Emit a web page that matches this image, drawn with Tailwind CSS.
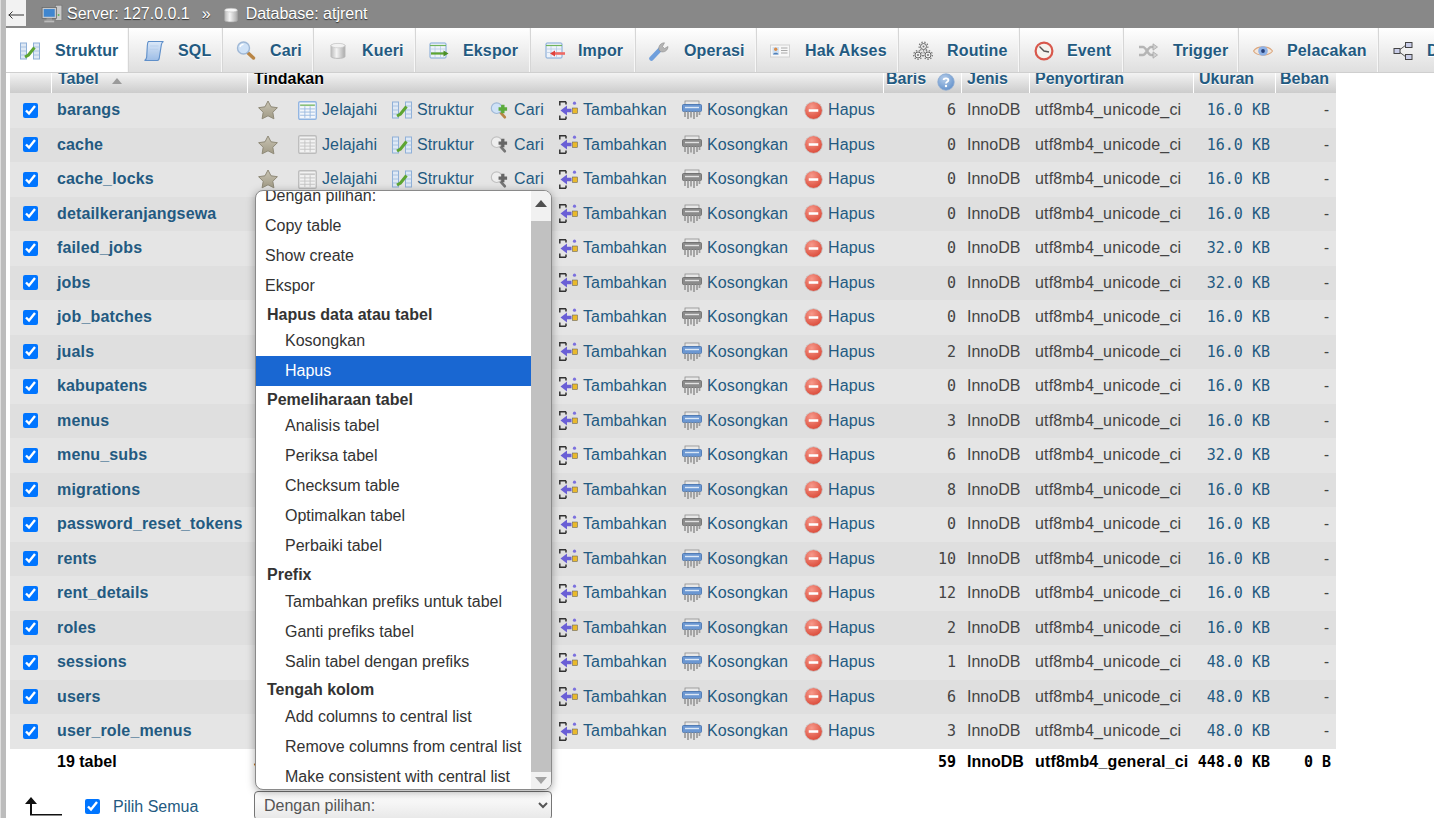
<!DOCTYPE html>
<html lang="en">
<head>
    <meta charset="UTF-8">
    <title>phpMyAdmin - atjrent</title>
    <script src="https://cdn.jsdelivr.net/npm/@tailwindcss/browser@4"></script>
</head>
<body class="bg-white font-['Liberation_Sans',Arial,sans-serif] text-[16px] h-screen overflow-hidden flex">

    <!-- icon sheet -->
    <svg class="absolute w-0 h-0">
        <defs>
            <linearGradient id="blueFill" x1="0" y1="0" x2="0" y2="1"><stop offset="0" stop-color="#dbe8f8"/><stop offset="1" stop-color="#9dbde6"/></linearGradient>
            <linearGradient id="cyl" x1="0" y1="0" x2="1" y2="0"><stop offset="0" stop-color="#bbb"/><stop offset=".4" stop-color="#f4f4f4"/><stop offset="1" stop-color="#aaa"/></linearGradient>
            <radialGradient id="redBall" cx=".4" cy=".3" r=".8"><stop offset="0" stop-color="#f79a8c"/><stop offset="1" stop-color="#d8412f"/></radialGradient>
            <radialGradient id="helpBall" cx=".4" cy=".3" r=".8"><stop offset="0" stop-color="#b5cdea"/><stop offset="1" stop-color="#5c8cc8"/></radialGradient>
            <linearGradient id="starFill" x1="0" y1="0" x2="0" y2="1"><stop offset="0" stop-color="#c9c4b4"/><stop offset="1" stop-color="#a09a85"/></linearGradient>
        </defs>
        <symbol id="i-server" viewBox="0 0 20 20">
            <rect x="13" y="2" width="6" height="14" fill="#c9c9c9" stroke="#777" stroke-width=".7"/>
            <circle cx="16" cy="11" r=".9" fill="#5cb85c"/>
            <rect x="1" y="4" width="13" height="10" fill="#c4c8cc" stroke="#666" stroke-width=".7"/>
            <rect x="2.5" y="5.5" width="10" height="7" fill="#3f86cf"/>
            <rect x="5" y="14" width="5" height="2" fill="#999"/>
            <rect x="3" y="16" width="9" height="1.6" fill="#bbb"/>
        </symbol>
        <symbol id="i-db" viewBox="0 0 20 20">
            <path d="M3 4.5C3 2.8 17 2.8 17 4.5V16C17 18.2 3 18.2 3 16Z" fill="url(#cyl)" stroke="#aaa" stroke-width=".7"/>
            <ellipse cx="10" cy="4.6" rx="7" ry="2" fill="#f7f7f7" stroke="#bbb" stroke-width=".6"/>
        </symbol>
        <symbol id="i-struktur" viewBox="0 0 20 20">
            <rect x="0.5" y="2" width="6" height="16" fill="#dfe9f5" stroke="#8fb0d8"/>
            <path d="M0.5 6H6.5M0.5 10H6.5M0.5 14H6.5" stroke="#9cb9dc" stroke-width=".8"/>
            <rect x="13.5" y="2" width="6" height="16" fill="#dfe9f5" stroke="#8fb0d8"/>
            <path d="M13.5 6H19.5M13.5 10H19.5M13.5 14H19.5" stroke="#9cb9dc" stroke-width=".8"/>
            <path d="M5 16L8.5 14L14.5 6.5" fill="none" stroke="#5da532" stroke-width="3"/>
        </symbol>
        <symbol id="i-sql" viewBox="1 1 18 18">
            <path d="M5 1.5H18.5C17.5 2 16.8 3 16.6 4.5L14.8 16C14.6 17.6 14 18.5 13 18.5H1.5C2.6 18 3.2 17 3.4 15.5L4 5C4.1 3.5 4.3 2 5 1.5Z" fill="url(#blueFill)" stroke="#5f8fc9"/>
            <path d="M6.5 5.5H14M6.2 8.5H13.6M6 11.5H13.2" stroke="#b8cfea" stroke-width=".8"/>
        </symbol>
        <symbol id="i-cari" viewBox="0 0 20 20">
            <path d="M11 11L17.5 17" stroke="#b98545" stroke-width="3.4" stroke-linecap="round"/>
            <circle cx="7.5" cy="7" r="6" fill="#cfe2f7" stroke="#9fb8d6" stroke-width="1.4"/>
            <path d="M4 6C4.5 4.4 6 3.4 7.5 3.4" stroke="#fff" stroke-width="1.3" fill="none"/>
        </symbol>
        <symbol id="i-cari-add" viewBox="0 0 20 20">
            <path d="M11 12L15.5 17" stroke="#b98545" stroke-width="3" stroke-linecap="round"/>
            <circle cx="7" cy="7.5" r="5.6" fill="#cfe2f7" stroke="#9fb8d6" stroke-width="1.2"/>
            <path d="M9 8.5H18M13.5 4V13" stroke="#5cab3c" stroke-width="3.6"/>
        </symbol>
        <symbol id="i-cari-off" viewBox="0 0 20 20">
            <path d="M11 12L15.5 17" stroke="#777" stroke-width="3" stroke-linecap="round"/>
            <circle cx="7" cy="7.5" r="5.6" fill="#eee" stroke="#c0c0c0" stroke-width="1.2"/>
            <path d="M9 8.5H18M13.5 4V13" stroke="#666" stroke-width="3.4"/>
        </symbol>
        <symbol id="i-kueri" viewBox="0 0 20 20">
            <path d="M3 4.5C3 2.5 17 2.5 17 4.5V15.5C17 18 3 18 3 15.5Z" fill="url(#cyl)" stroke="#bbb"/>
            <ellipse cx="10" cy="4.6" rx="7" ry="2.2" fill="#f2f2f2" stroke="#c2c2c2" stroke-width=".6"/>
        </symbol>
        <symbol id="i-ekspor" viewBox="0 0 20 20">
            <rect x="1" y="2" width="16" height="15" rx="1" fill="#eef3fa" stroke="#7fa6d6"/>
            <path d="M1 4.5H17" stroke="#6fb35a" stroke-width="1.2"/>
            <path d="M1 8H17M1 11.5H17M6 5V17M11.5 5V17" stroke="#b7cbe5" stroke-width=".8"/>
            <path d="M2 12.5H15" stroke="#5da532" stroke-width="2.2"/>
            <path d="M14.5 9.5L19.5 12.5L14.5 15.5Z" fill="#4c8f26"/>
        </symbol>
        <symbol id="i-impor" viewBox="0 0 20 20">
            <rect x="1" y="2" width="16" height="15" rx="1" fill="#eef3fa" stroke="#7fa6d6"/>
            <path d="M1 4.5H17" stroke="#6fb35a" stroke-width="1.2"/>
            <path d="M1 8H17M1 11.5H17M6 5V17M11.5 5V17" stroke="#b7cbe5" stroke-width=".8"/>
            <path d="M9 12.5H20" stroke="#ee6a64" stroke-width="2.6"/>
            <path d="M10 9.5L5 12.5L10 15.5Z" fill="#e0423c"/>
        </symbol>
        <symbol id="i-operasi" viewBox="0 0 20 20">
            <path d="M2.5 17.5L11 8.5" stroke="#6f9fdc" stroke-width="4.6" stroke-linecap="round"/>
            <path d="M10 9C9 5.5 11.5 1.8 15.5 1.8L13.5 5.5L15.5 7.5L19 5.5C19 9.5 15 12 11.5 10.5Z" fill="#b4b4b4" stroke="#8d8d8d" stroke-width=".6"/>
        </symbol>
        <symbol id="i-hak" viewBox="0 0 20 20">
            <rect x="0.5" y="4" width="19" height="12" fill="#f7f7f7" stroke="#d2d2d2"/>
            <rect x="2.5" y="6" width="6.5" height="7.5" fill="#cfe0f2"/>
            <circle cx="5.7" cy="8.3" r="1.7" fill="#d98c4a"/>
            <path d="M3 13.5C3 11 8.5 11 8.5 13.5Z" fill="#4f7fb8"/>
            <path d="M11 7H17.5M11 9.5H17.5M11 12H17.5" stroke="#a9a9a9" stroke-width="1"/>
        </symbol>
        <symbol id="i-routine" viewBox="0 0 20 20">
            <g fill="#eee" stroke="#666" stroke-width="1">
                <circle cx="10.5" cy="5.5" r="3"/><circle cx="5" cy="14" r="3"/><circle cx="15" cy="14" r="3"/>
            </g>
            <g fill="none" stroke="#777" stroke-width="1.2" stroke-dasharray="1.4 1.6">
                <circle cx="10.5" cy="5.5" r="4.4"/><circle cx="5" cy="14" r="4.4"/><circle cx="15" cy="14" r="4.4"/>
            </g>
            <circle cx="10.5" cy="5.5" r="1" fill="#777"/><circle cx="5" cy="14" r="1" fill="#777"/><circle cx="15" cy="14" r="1" fill="#777"/>
        </symbol>
        <symbol id="i-event" viewBox="0 0 20 20">
            <circle cx="10" cy="10" r="8.4" fill="#f5f3ee" stroke="#d8584c" stroke-width="2.2"/>
            <path d="M5.5 5.5L10 10L15 11" fill="none" stroke="#555" stroke-width="1.4"/>
        </symbol>
        <symbol id="i-trigger" viewBox="0 0 20 20">
            <path d="M1 6H5C8 6 10 14 13 14H16M1 14H5C8 14 10 6 13 6H16" fill="none" stroke="#b5b5b5" stroke-width="2.4"/>
            <path d="M15 2.8L19.5 6L15 9.2ZM15 10.8L19.5 14L15 17.2Z" fill="#d2d2d2" stroke="#a2a2a2" stroke-width=".7"/>
        </symbol>
        <symbol id="i-eye" viewBox="0 0 20 20">
            <path d="M0.5 10C4 4.5 16 4.5 19.5 10C16 15.5 4 15.5 0.5 10Z" fill="#f3e7dc" stroke="#dca77d" stroke-width="1.1"/>
            <circle cx="10" cy="10" r="4.8" fill="#8fb2e6"/>
            <circle cx="10" cy="10" r="1.9" fill="#27407a"/>
        </symbol>
        <symbol id="i-desainer" viewBox="0 0 20 20">
            <path d="M5 10L13 4M5 10L13 16" stroke="#555" stroke-width="1" fill="none"/>
            <g fill="#c9cde8" stroke="#444" stroke-width="1">
                <rect x="1" y="7.5" width="6" height="5"/><rect x="12.5" y="1.5" width="6.5" height="5"/><rect x="12.5" y="13.5" width="6.5" height="5"/>
            </g>
        </symbol>
        <symbol id="i-star" viewBox="0 0 20 20">
            <path d="M10 1L13 6.8L19.4 7.7L14.8 12.3L15.9 18.8L10 15.8L4.1 18.8L5.2 12.3L0.6 7.7L7 6.8Z" fill="url(#starFill)" stroke="#8f8a78" stroke-width="1" stroke-linejoin="round"/>
        </symbol>
        <symbol id="i-jelajahi" viewBox="0 0 18 18">
            <rect x="0.7" y="0.7" width="16.6" height="16.6" rx="1.2" fill="#f4f7fb" stroke="#8fb4e2" stroke-width="1.3"/>
            <path d="M2 4H16" stroke="#8ac07a" stroke-width="1.6"/>
            <path d="M2 7.5H16M2 10.5H16M2 13.5H16M6.5 5V16M11.5 5V16" stroke="#9dbbe0" stroke-width=".9"/>
        </symbol>
        <symbol id="i-jelajahi-off" viewBox="0 0 18 18">
            <rect x="0.7" y="0.7" width="16.6" height="16.6" rx="1.2" fill="#f2f2f2" stroke="#bcbcbc" stroke-width="1.3"/>
            <path d="M2 4H16" stroke="#c7c7c7" stroke-width="1.6"/>
            <path d="M2 7.5H16M2 10.5H16M2 13.5H16M6.5 5V16M11.5 5V16" stroke="#c4c4c4" stroke-width=".9"/>
        </symbol>
        <symbol id="i-tambah" viewBox="0 0 19 19">
            <path d="M7 0.8H0.8V4.5M7 0.8V3.5M0.8 14.5V18.2H7M7 15.5V18.2" fill="none" stroke="#333" stroke-width="1.5"/>
            <path d="M1.5 9.5L8 4.5V7.7H12.5V11.3H8V14.5Z" fill="#6a5fd6"/>
            <rect x="13.5" y="7" width="5" height="5.5" fill="#e9b92c" stroke="#555" stroke-width=".5"/>
            <circle cx="15.5" cy="2.2" r="1.6" fill="#7b70de"/>
        </symbol>
        <symbol id="i-shred" viewBox="0 0 20 20">
            <rect x="3" y="1" width="14" height="4" fill="#e8e8e8" stroke="#8e8e8e" stroke-width=".8"/>
            <rect x="0.5" y="4.5" width="19" height="7" rx="1" fill="#6b97d2" stroke="#3f6fae" stroke-width=".8"/>
            <path d="M3 7.5H17" stroke="#dce8f6" stroke-width="1.4"/>
            <path d="M3 11.5V17M6 11.5V19M9 11.5V17.5M12 11.5V19M15 11.5V17M17.5 11.5V15" stroke="#9b9b9b" stroke-width="1.7"/>
        </symbol>
        <symbol id="i-shred-off" viewBox="0 0 20 20">
            <rect x="3" y="1" width="14" height="4" fill="#e8e8e8" stroke="#8e8e8e" stroke-width=".8"/>
            <rect x="0.5" y="4.5" width="19" height="7" rx="1" fill="#8b8b8b" stroke="#666" stroke-width=".8"/>
            <path d="M3 7.5H17" stroke="#e2e2e2" stroke-width="1.4"/>
            <path d="M3 11.5V17M6 11.5V19M9 11.5V17.5M12 11.5V19M15 11.5V17M17.5 11.5V15" stroke="#9b9b9b" stroke-width="1.7"/>
        </symbol>
        <symbol id="i-hapus" viewBox="0 0 18 18">
            <circle cx="9" cy="9" r="8.4" fill="url(#redBall)" stroke="#c9c9c9" stroke-width=".8"/>
            <rect x="4.5" y="7.8" width="9" height="2.4" fill="#fff"/>
        </symbol>
        <symbol id="i-help" viewBox="0 0 18 18">
            <circle cx="9" cy="9" r="8.2" fill="url(#helpBall)" stroke="#8aaad2" stroke-width=".8"/>
            <path d="M6.6 7C6.8 4.8 11.4 4.8 11.4 7.2C11.4 8.8 9 8.8 9 10.6" fill="none" stroke="#fff" stroke-width="1.8"/>
            <circle cx="9" cy="13" r="1.2" fill="#fff"/>
        </symbol>
    </svg>

    <div class="w-[6px] shrink-0 bg-[#bcbcbc] border-l border-[#dedede]"></div>

    <div class="flex-1 min-w-0 flex flex-col">
        <!-- breadcrumb bar -->
        <div class="h-[28px] shrink-0 bg-[#888888] flex items-start text-white [text-shadow:0_1px_1px_#333]">
            <div class="w-[20px] h-[26px] bg-[#f2f2f2] flex items-center justify-center">
                <svg class="w-[16px] h-[10px] mt-[4px]" viewBox="0 0 16 10"><path d="M0.5 5H16M4.5 1.5L1 5L4.5 8.5" fill="none" stroke="#333" stroke-width="1"/></svg>
            </div>
            <svg class="w-[22px] h-[22px] ml-[15px] mt-[3px]"><use href="#i-server"/></svg>
            <span class="ml-[4px] leading-[28px]">Server: 127.0.0.1</span>
            <span class="ml-[12px] leading-[28px]">»</span>
            <svg class="w-[18px] h-[18px] ml-[11px] mt-[6px]"><use href="#i-db"/></svg>
            <span class="ml-[6px] leading-[28px]">Database: atjrent</span>
        </div>

        <!-- tabs -->
        <div id="tabs" class="h-[45px] shrink-0 flex overflow-hidden bg-linear-to-b from-white to-[#dfdfdf] border-b border-[#cfcfcf]"></div>

        <!-- table -->
        <div class="pl-[4px] w-[1330px]">
            <div class="h-[20px] overflow-hidden grid grid-cols-[42px_196px_636px_78px_68px_164px_82px_60px] bg-linear-to-b from-[#f3f3f3] to-[#cccccc] font-bold text-[#235a81] leading-[24px] [text-shadow:0_1px_0_#fff]">
                <div class="border-r border-white"></div>
                <div class="border-r border-white pl-[6px] -mt-[6px] flex items-start gap-[13px]">Tabel<svg class="w-[10px] h-[6px] mt-[11px]" viewBox="0 0 10 6"><path d="M5 0L10 6H0Z" fill="#9a9a9a"/></svg></div>
                <div class="border-r border-white pl-[6px] -mt-[6px] text-black">Tindakan</div>
                <div class="border-r border-white pl-[2px] -mt-[6px] flex items-start gap-[11px]">Baris<svg class="w-[18px] h-[18px] mt-[6px]"><use href="#i-help"/></svg></div>
                <div class="border-r border-white pl-[5px] -mt-[6px]">Jenis</div>
                <div class="border-r border-white pl-[5px] -mt-[6px]">Penyortiran</div>
                <div class="border-r border-white pl-[5px] -mt-[6px]">Ukuran</div>
                <div class="pl-[4px] -mt-[6px]">Beban</div>
            </div>

            <div id="rows"></div>

            <!-- summary row -->
            <div class="h-[27px] grid grid-cols-[42px_196px_636px_78px_68px_164px_82px_60px] items-center font-bold text-black">
                <div></div>
                <div class="pl-[5px]">19 tabel</div>
                <div class="pl-[6px]">Jumlah</div>
                <div class="text-right pr-[6px] font-['DejaVu_Sans_Mono',monospace] text-[15px]">59</div>
                <div class="pl-[5px]">InnoDB</div>
                <div class="pl-[5px] whitespace-nowrap tracking-[0.17px]">utf8mb4_general_ci</div>
                <div class="text-right pr-[6px] font-['DejaVu_Sans_Mono',monospace] text-[15px] whitespace-nowrap">448.0 KB</div>
                <div class="text-right pr-[5px] font-['DejaVu_Sans_Mono',monospace] text-[15px]">0 B</div>
            </div>

            <!-- footer -->
            <div class="mt-[18px] flex items-center h-[26px]">
                <svg class="w-[38px] h-[20px] ml-[15px]" viewBox="0 0 38 20"><path d="M6 0L12 7H7V17H37V18.5H5V7H0Z" fill="#111"/></svg>
                <input type="checkbox" checked class="w-[15px] h-[15px] ml-[22px] accent-[#0075ff]">
                <span class="ml-[13px] text-[#235a81] w-[141px]">Pilih Semua</span>
                <select class="w-[298px] h-[29px] pl-[5px] text-[#555] text-[16px] border border-[#767676] rounded-[4px] bg-linear-to-b from-white to-[#e8e8e8] -mt-[2px]">
                    <option>Dengan pilihan:</option>
                </select>
            </div>
        </div>
    </div>

    <!-- open select popup -->
    <div class="absolute left-[255px] top-[190px] w-[297px] h-[600px] bg-white border border-[#8a8a8a] rounded-[8px] shadow-[0_2px_8px_rgba(0,0,0,0.35)] overflow-hidden flex text-[#333]">
        <div id="menu" class="w-[275px] -mt-[10px] shrink-0"></div>
        <div class="flex-1 bg-[#f1f1f1] flex flex-col items-center">
            <svg class="w-[12px] h-[7px] mt-[9px]" viewBox="0 0 12 7"><path d="M6 0L12 7H0Z" fill="#505050"/></svg>
            <div class="w-full bg-[#c1c1c1] h-[551px] mt-[14px]"></div>
            <svg class="w-[12px] h-[7px] mt-[5px]" viewBox="0 0 12 7"><path d="M0 0H12L6 7Z" fill="#a3a3a3"/></svg>
        </div>
    </div>

    <script>
        const tabs = [
            ["Struktur", "i-struktur", 123, 14, 35, true],
            ["SQL", "i-sql", 94, 16, 34],
            ["Cari", "i-cari", 91, 14, 34],
            ["Kueri", "i-kueri", 102, 15, 34],
            ["Ekspor", "i-ekspor", 115, 14, 34],
            ["Impor", "i-impor", 105, 15, 33],
            ["Operasi", "i-operasi", 121, 14, 35],
            ["Hak Akses", "i-hak", 142, 14, 35],
            ["Routine", "i-routine", 121, 15, 34],
            ["Event", "i-event", 104, 15, 33],
            ["Trigger", "i-trigger", 115, 15, 35],
            ["Pelacakan", "i-eye", 140, 15, 34],
            ["Desainer", "i-desainer", 120, 15, 34]
        ];

        document.getElementById("tabs").innerHTML = tabs.map(([name, icon, w, pad, offset, active], i) => `
            <div class="shrink-0 h-[44px] pt-[1px] flex items-center border-r border-[#d6d6d6] shadow-[inset_-1px_0_0_#f7f7f7] font-bold text-[#235a81] tracking-[0.15px] [text-shadow:0_1px_0_#fff] ${active ? "bg-white" : ""}" style="width:${w}px">
                <svg class="w-[20px] h-[20px] shrink-0" style="margin-left:${i ? pad - 1 : pad}px;margin-right:${offset - 20}px"><use href="#${icon}"/></svg>
                <span class="whitespace-nowrap">${name}</span>
            </div>`).join("");

        const tables = [
            ["barangs", 6, "16.0"], ["cache", 0, "16.0"], ["cache_locks", 0, "16.0"],
            ["detailkeranjangsewa", 0, "16.0"], ["failed_jobs", 0, "32.0"], ["jobs", 0, "32.0"],
            ["job_batches", 0, "16.0"], ["juals", 2, "16.0"], ["kabupatens", 0, "16.0"],
            ["menus", 3, "16.0"], ["menu_subs", 6, "32.0"], ["migrations", 8, "16.0"],
            ["password_reset_tokens", 0, "16.0"], ["rents", 10, "16.0"], ["rent_details", 12, "16.0"],
            ["roles", 2, "16.0"], ["sessions", 1, "48.0"], ["users", 6, "48.0"], ["user_role_menus", 3, "48.0"]
        ];

        function action(icon, label, width, size) {
            return `<div class="flex items-center gap-[5px] shrink-0" style="width:${width}px"><svg class="shrink-0" style="width:${size}px;height:${size}px"><use href="#${icon}"/></svg><span class="tracking-[0.12px]">${label}</span></div>`;
        }

        document.getElementById("rows").innerHTML = tables.map(([name, count, size], i) => `
            <div class="h-[34.5px] grid grid-cols-[42px_196px_636px_78px_68px_164px_82px_60px] items-center ${i % 2 ? "bg-[#dfdfdf]" : "bg-[#e5e5e5]"} text-[#444]">
                <div class="flex pl-[13px]"><input type="checkbox" checked class="w-[15px] h-[15px] accent-[#0075ff]"></div>
                <div class="pl-[5px] font-bold text-[#235a81] whitespace-nowrap tracking-[0.15px]">${name}</div>
                <div class="pl-[10px] flex items-center text-[#235a81]">
                    <svg class="w-[20px] h-[20px] mr-[20px] shrink-0"><use href="#i-star"/></svg>
                    ${action(count ? "i-jelajahi" : "i-jelajahi-off", "Jelajahi", 94, 19)}
                    ${action("i-struktur", "Struktur", 98, 20)}
                    ${action(count ? "i-cari-add" : "i-cari-off", "Cari", 69, 19)}
                    ${action("i-tambah", "Tambahkan", 123, 19)}
                    ${action(count ? "i-shred" : "i-shred-off", "Kosongkan", 122, 20)}
                    ${action("i-hapus", "Hapus", 70, 19)}
                </div>
                <div class="text-right pr-[6px] font-['DejaVu_Sans_Mono',monospace] text-[15px]">${count}</div>
                <div class="pl-[5px]">InnoDB</div>
                <div class="pl-[5px] whitespace-nowrap tracking-[0.17px]">utf8mb4_unicode_ci</div>
                <div class="text-right pr-[6px] font-['DejaVu_Sans_Mono',monospace] text-[15px] text-[#235a81] whitespace-nowrap">${size} KB</div>
                <div class="text-right pr-[5px] font-['DejaVu_Sans_Mono',monospace] text-[15px]">-</div>
            </div>`).join("");

        const menu = [
            ["Dengan pilihan:"], ["Copy table"], ["Show create"], ["Ekspor"],
            ["Hapus data atau tabel", "group", "h-[25.4px]"], ["Kosongkan", "sub"], ["Hapus", "active"],
            ["Pemeliharaan tabel", "group", "h-[24.4px]"], ["Analisis tabel", "sub"], ["Periksa tabel", "sub"], ["Checksum table", "sub"], ["Optimalkan tabel", "sub"], ["Perbaiki tabel", "sub"],
            ["Prefix", "group", "h-[26.4px]"], ["Tambahkan prefiks untuk tabel", "sub"], ["Ganti prefiks tabel", "sub"], ["Salin tabel dengan prefiks", "sub"],
            ["Tengah kolom", "group", "h-[24.4px]"], ["Add columns to central list", "sub"], ["Remove columns from central list", "sub"], ["Make consistent with central list", "sub"]
        ];

        document.getElementById("menu").innerHTML = menu.map(([label, kind, height]) => {
            if (kind === "group") return `<div class="${height} flex items-center pt-[2px] pl-[11px] font-bold whitespace-nowrap">${label}</div>`;
            if (kind === "sub") return `<div class="h-[30px] flex items-center pl-[29px] whitespace-nowrap">${label}</div>`;
            if (kind === "active") return `<div class="h-[30px] flex items-center pl-[29px] bg-[#1967d2] text-white">${label}</div>`;
            return `<div class="h-[30px] flex items-center pl-[9px]">${label}</div>`;
        }).join("");
    </script>
</body>
</html>
